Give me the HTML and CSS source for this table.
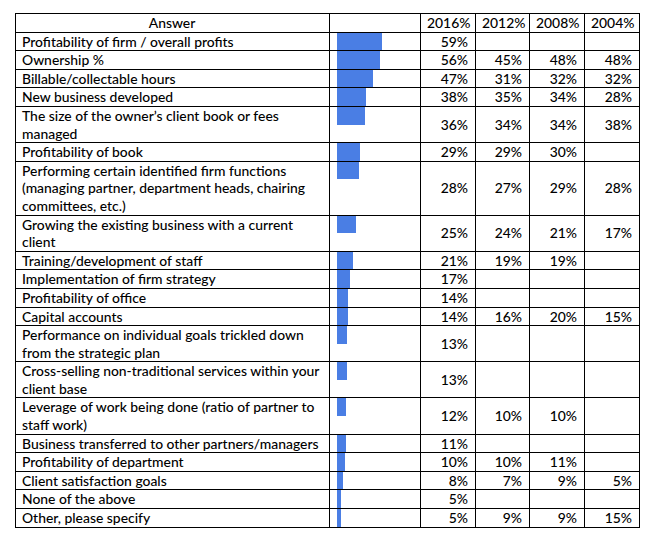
FILE: index.html
```html
<!DOCTYPE html>
<html>
<head>
<meta charset="utf-8">
<link rel="stylesheet" href="styles.css">
</head>
<body>
<div class="page">
<table class="survey">
<colgroup>
<col class="c-answer"><col class="c-bar"><col class="c-num"><col class="c-num2"><col class="c-num"><col class="c-num">
</colgroup>
<thead>
<tr><th class="answer-head">Answer</th><th></th><th class="num">2016%</th><th class="num">2012%</th><th class="num">2008%</th><th class="num">2004%</th></tr>
</thead>
<tbody>
<tr><td class="answer">Profitability of firm / overall profits</td><td class="barcell"><div class="bar" style="width:45px"></div></td><td class="num">59%</td><td class="num"></td><td class="num"></td><td class="num"></td></tr>
<tr><td class="answer">Ownership %</td><td class="barcell"><div class="bar" style="width:43px"></div></td><td class="num">56%</td><td class="num">45%</td><td class="num">48%</td><td class="num">48%</td></tr>
<tr><td class="answer">Billable/collectable hours</td><td class="barcell"><div class="bar" style="width:36px"></div></td><td class="num">47%</td><td class="num">31%</td><td class="num">32%</td><td class="num">32%</td></tr>
<tr><td class="answer">New business developed</td><td class="barcell"><div class="bar" style="width:29px"></div></td><td class="num">38%</td><td class="num">35%</td><td class="num">34%</td><td class="num">28%</td></tr>
<tr><td class="answer">The size of the owner’s client book or fees<br>managed</td><td class="barcell"><div class="bar" style="width:28px"></div></td><td class="num">36%</td><td class="num">34%</td><td class="num">34%</td><td class="num">38%</td></tr>
<tr><td class="answer">Profitability of book</td><td class="barcell"><div class="bar" style="width:23px"></div></td><td class="num">29%</td><td class="num">29%</td><td class="num">30%</td><td class="num"></td></tr>
<tr><td class="answer">Performing certain identified firm functions<br>(managing partner, department heads, chairing<br>committees, etc.)</td><td class="barcell"><div class="bar" style="width:22px"></div></td><td class="num">28%</td><td class="num">27%</td><td class="num">29%</td><td class="num">28%</td></tr>
<tr><td class="answer">Growing the existing business with a current<br>client</td><td class="barcell"><div class="bar" style="width:19px"></div></td><td class="num">25%</td><td class="num">24%</td><td class="num">21%</td><td class="num">17%</td></tr>
<tr><td class="answer">Training/development of staff</td><td class="barcell"><div class="bar" style="width:16px"></div></td><td class="num">21%</td><td class="num">19%</td><td class="num">19%</td><td class="num"></td></tr>
<tr><td class="answer">Implementation of firm strategy</td><td class="barcell"><div class="bar" style="width:13px"></div></td><td class="num">17%</td><td class="num"></td><td class="num"></td><td class="num"></td></tr>
<tr><td class="answer">Profitability of office</td><td class="barcell"><div class="bar" style="width:11px"></div></td><td class="num">14%</td><td class="num"></td><td class="num"></td><td class="num"></td></tr>
<tr><td class="answer">Capital accounts</td><td class="barcell"><div class="bar" style="width:11px"></div></td><td class="num">14%</td><td class="num">16%</td><td class="num">20%</td><td class="num">15%</td></tr>
<tr><td class="answer">Performance on individual goals trickled down<br>from the strategic plan</td><td class="barcell"><div class="bar" style="width:10px"></div></td><td class="num">13%</td><td class="num"></td><td class="num"></td><td class="num"></td></tr>
<tr><td class="answer">Cross-selling non-traditional services within your<br>client base</td><td class="barcell"><div class="bar" style="width:10px"></div></td><td class="num">13%</td><td class="num"></td><td class="num"></td><td class="num"></td></tr>
<tr><td class="answer">Leverage of work being done (ratio of partner to<br>staff work)</td><td class="barcell"><div class="bar" style="width:9px"></div></td><td class="num">12%</td><td class="num">10%</td><td class="num">10%</td><td class="num"></td></tr>
<tr><td class="answer">Business transferred to other partners/managers</td><td class="barcell"><div class="bar" style="width:9px"></div></td><td class="num">11%</td><td class="num"></td><td class="num"></td><td class="num"></td></tr>
<tr><td class="answer">Profitability of department</td><td class="barcell"><div class="bar" style="width:8px"></div></td><td class="num">10%</td><td class="num">10%</td><td class="num">11%</td><td class="num"></td></tr>
<tr><td class="answer">Client satisfaction goals</td><td class="barcell"><div class="bar" style="width:6px"></div></td><td class="num">8%</td><td class="num">7%</td><td class="num">9%</td><td class="num">5%</td></tr>
<tr><td class="answer">None of the above</td><td class="barcell"><div class="bar" style="width:4px"></div></td><td class="num">5%</td><td class="num"></td><td class="num"></td><td class="num"></td></tr>
<tr><td class="answer">Other, please specify</td><td class="barcell"><div class="bar" style="width:4px"></div></td><td class="num">5%</td><td class="num">9%</td><td class="num">9%</td><td class="num">15%</td></tr>
</tbody>
</table>
</div>
</body>
</html>
```
FILE: styles.css
```css
html, body {
  margin: 0;
  padding: 0;
  background: #ffffff;
}
.page {
  padding: 13px 0 0 15px;
}
.survey {
  border-collapse: collapse;
  table-layout: fixed;
  width: 624px;
  font-family: Lato, "Liberation Sans", sans-serif;
  font-size: 13.9px;
  font-weight: 500;
  line-height: 17.6px;
  color: #000;
}
.c-answer { width: 314px; }
.c-bar { width: 91px; }
.c-num { width: 55px; }
.c-num2 { width: 54px; }
.survey th,
.survey td {
  border: 1px solid #000;
  padding: 0 7px 0 6px;
  font-weight: 500;
  white-space: nowrap;
  vertical-align: middle;
}
.survey .answer-head {
  text-align: center;
}
.survey .answer {
  text-align: left;
  vertical-align: top;
}
.survey .num {
  text-align: right;
}
.survey .barcell {
  vertical-align: top;
  padding: 0 0 0 7px;
}
.bar {
  height: 17.6px;
  background: #4a7ee4;
}
```
